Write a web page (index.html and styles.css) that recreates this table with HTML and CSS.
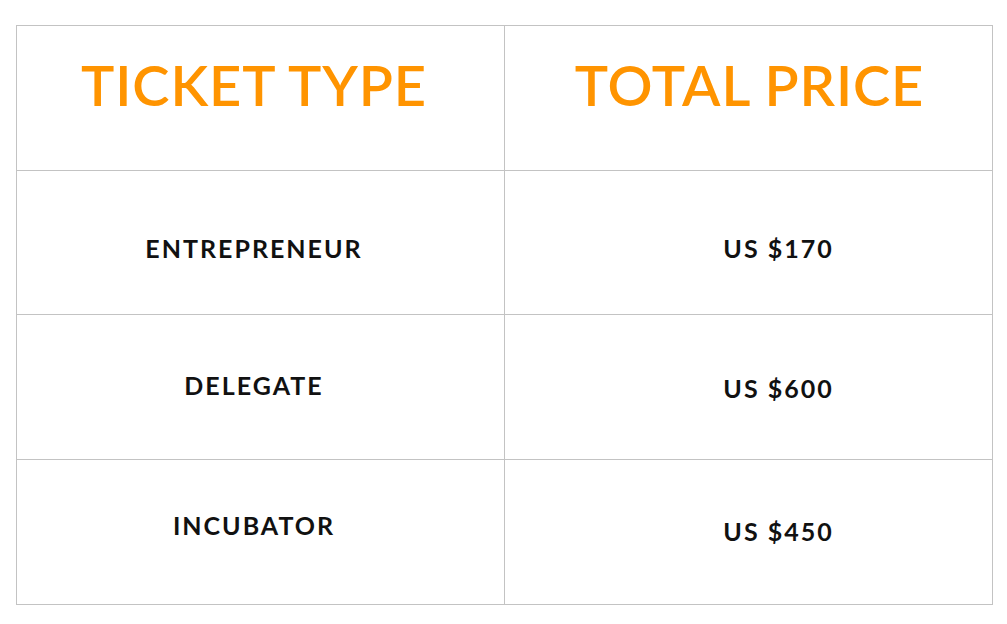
FILE: index.html
```html
<!DOCTYPE html>
<html>
<head>
<meta charset="utf-8">
<link rel="stylesheet" href="styles.css">
</head>
<body>
<div class="price-table">
  <div class="cell head left r1">TICKET TYPE</div>
  <div class="cell head right r1">TOTAL PRICE</div>
  <div class="cell body left r2">ENTREPRENEUR</div>
  <div class="cell body right price r2">US $170</div>
  <div class="cell body left r3">DELEGATE</div>
  <div class="cell body right price r3b">US $600</div>
  <div class="cell body left r4">INCUBATOR</div>
  <div class="cell body right price r4b">US $450</div>
</div>
</body>
</html>
```
FILE: styles.css
```css
html, body {
  margin: 0;
  padding: 0;
  background: #ffffff;
}
body {
  padding: 25px 0 0 16px;
  font-family: "Lato", "Liberation Sans", sans-serif;
}
.price-table {
  display: grid;
  grid-template-columns: 488px 488px;
  grid-template-rows: 145px 144px 145px 145px;
  width: 977px;
  border-left: 1px solid #c3c3c3;
  border-top: 1px solid #c3c3c3;
  box-sizing: border-box;
}
.cell {
  border-right: 1px solid #c3c3c3;
  border-bottom: 1px solid #c3c3c3;
  display: flex;
  align-items: center;
  justify-content: center;
  box-sizing: border-box;
  line-height: 1;
}
.head {
  color: #ff9400;
  font-size: 56px;
  font-weight: 600;
  letter-spacing: 0.9px;
  padding-bottom: 26px;
}
.body {
  color: #111111;
  font-size: 25px;
  font-weight: 700;
  letter-spacing: 2px;
}
.left { padding-right: 13px; }
.head.right { padding-left: 2px; }
.price { padding-left: 60px; }
.r2 { padding-top: 12px; }
.r3 { padding-bottom: 4px; }
.r3b { padding-top: 2px; }
.r4 { padding-bottom: 14px; }
.r4b { padding-bottom: 2px; }
```
